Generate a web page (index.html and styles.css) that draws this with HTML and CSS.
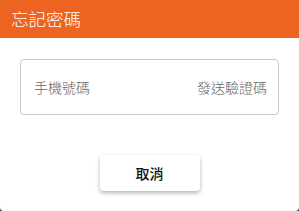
FILE: index.html
```html
<!DOCTYPE html>
<html lang="zh-Hant">
<head>
    <meta charset="UTF-8">
    <title>忘記密碼</title>
    <link rel="stylesheet" href="styles.css">
</head>
<body>
    <div class="dialog">
        <div class="dialog-header">忘記密碼</div>
        <div class="dialog-body">
            <div class="phone-field">
                <span class="phone-label">手機號碼</span>
                <span class="send-code">發送驗證碼</span>
            </div>
            <button class="cancel-btn">取消</button>
        </div>
    </div>
</body>
</html>
```

FILE: styles.css
```css
body {
    margin: 0;
    padding: 0;
    width: 299px;
    height: 211px;
    background-color: #444;
    font-family: "Noto Sans CJK TC", "Noto Sans", sans-serif;
    overflow: hidden;
}

.dialog {
    width: 299px;
    height: 211px;
    background-color: #ffffff;
    border-radius: 0 0 4px 4px;
    display: flex;
    flex-direction: column;
}

.dialog-header {
    height: 38px;
    padding-left: 11px;
    background-color: #ec6420;
    color: #ffffff;
    font-size: 17.5px;
    font-weight: 300;
    line-height: 38px;
}

.dialog-body {
    display: flex;
    flex-direction: column;
    align-items: center;
    padding: 21px 20px 0;
}

.phone-field {
    box-sizing: border-box;
    width: 100%;
    height: 56px;
    padding: 0 11px 0 13px;
    border: 1px solid #c8c8c8;
    border-radius: 4px;
    display: flex;
    justify-content: space-between;
    align-items: center;
    font-size: 14px;
    font-weight: 300;
    color: #666;
}

.cancel-btn {
    margin-top: 40px;
    width: 100px;
    height: 36px;
    background-color: #ffffff;
    border: none;
    border-radius: 4px;
    box-shadow: 0 2px 4px rgba(0, 0, 0, 0.3);
    font-family: inherit;
    font-size: 14px;
    font-weight: 500;
    color: #111;
    cursor: pointer;
}
```
